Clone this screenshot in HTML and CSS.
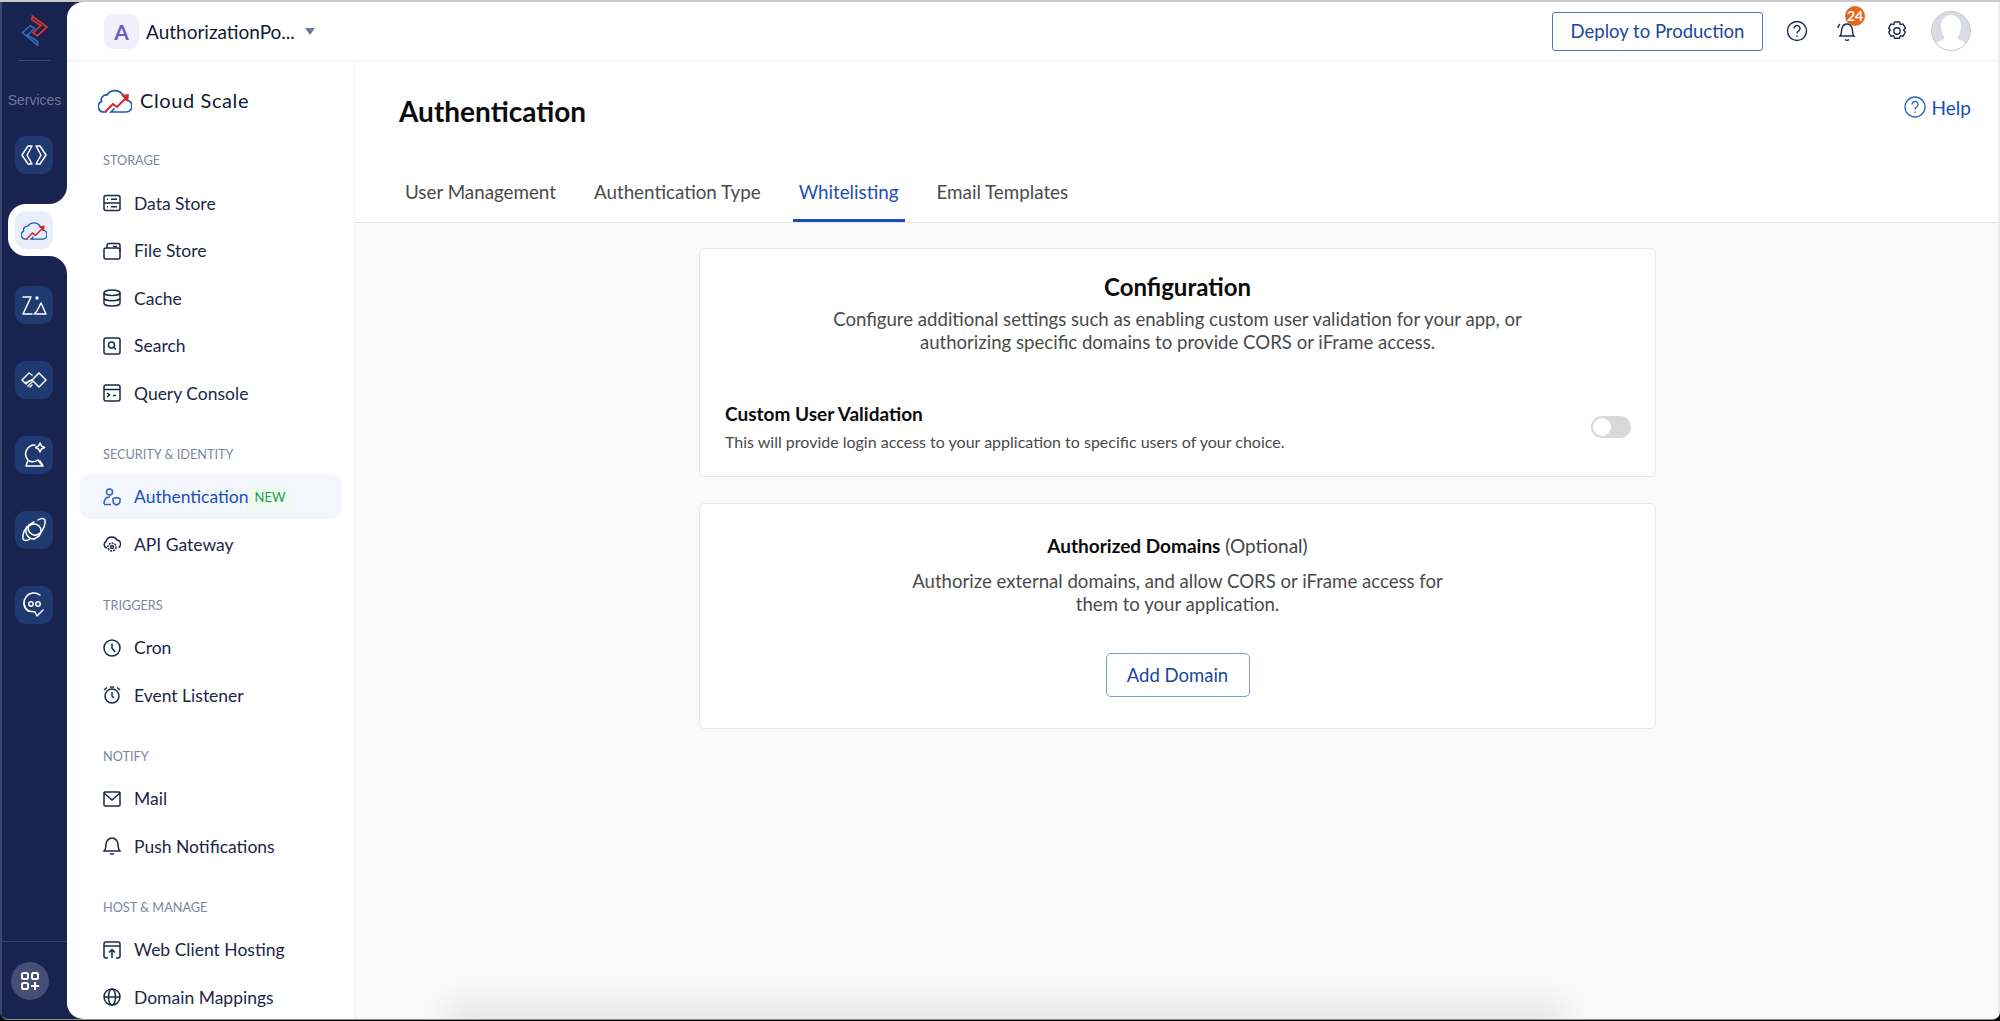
FILE: index.html
```html
<!DOCTYPE html>
<html lang="en">
<head>
    <meta charset="UTF-8">
    <title>Authentication</title>
    <link rel="stylesheet" href="styles.css">
</head>
<body>
    <svg class="defs" width="0" height="0">
        <defs>
            <symbol id="cloud" viewBox="0 0 34 26">
                <path d="M8 25H6a5.500 5.500 0 0 1-2.500-10.500A5 5 0 0 1 9 8a9.500 9.500 0 0 1 16 0" fill="none" stroke="#1c5aa6" stroke-width="1.700" stroke-linecap="round"/>
                <path d="M28 13a6 6 0 0 1 0 12H13l3-3" fill="none" stroke="#1c5aa6" stroke-width="1.700" stroke-linecap="round"/>
                <path d="M7 25l8-8 4 3 9-9" fill="none" stroke="#d8262c" stroke-width="2"/>
                <path d="M23 8l8-1-1 8z" fill="#d8262c"/>
            </symbol>
        </defs>
    </svg>

    <div class="app">
        <nav class="rail">
            <div class="rail-logo">
                <svg width="36" height="40" viewBox="15 10 36 40" fill="none" stroke-width="2">
                    <path d="M30.500 14l17 12.500-11 10-5-3.500 9-8-10.500-7z" stroke="#d8362f"/>
                    <path d="M19 33l9-8 5 3-8 8 11.500 7v4.500z" stroke="#2a6db5"/>
                </svg>
            </div>
            <div class="rail-label">Services</div>
            <div class="rail-items">
                <div class="rail-slot">
                    <div class="rail-tile">
                        <svg width="26" height="20" viewBox="0 0 26 20" class="rail-icon">
                            <path d="M7 1h4L6 10l5 9H7L1 10z"/><path d="M19 1h-4l5 9-5 9h4l6-9z"/>
                        </svg>
                    </div>
                </div>
                <div class="rail-slot active">
                    <div class="rail-tile">
                        <svg width="26" height="20"><use href="#cloud"/></svg>
                    </div>
                </div>
                <div class="rail-slot">
                    <div class="rail-tile">
                        <svg width="26" height="22" viewBox="0 0 26 22" class="rail-icon">
                            <path d="M2 3h8L2 20h9"/><path d="M13 20c2-1 3-3 4-5l3-6 5 11H15"/><circle cx="16" cy="4" r="1" fill="#fff"/>
                        </svg>
                    </div>
                </div>
                <div class="rail-slot">
                    <div class="rail-tile">
                        <svg width="26" height="16" viewBox="0 0 26 16" class="rail-icon">
                            <path d="M18 1l7 7-7 7-7-7z"/><path d="M11 3L8 1 1 8l3 3 7-3"/><path d="M5 12l3-3M7 14l4-4M9 15l2-2"/>
                        </svg>
                    </div>
                </div>
                <div class="rail-slot">
                    <div class="rail-tile">
                        <svg width="24" height="26" viewBox="0 0 24 26" class="rail-icon">
                            <path d="M13 3a9 9 0 0 0-7 15l-2 6h17l-3-5"/><path d="M7 19a9 9 0 0 0 9-1l3 4"/>
                            <path d="M18 1l1.500 3 3 1.500-3 1.500-1.500 3-1.500-3-3-1.500 3-1.500z"/>
                        </svg>
                    </div>
                </div>
                <div class="rail-slot">
                    <div class="rail-tile">
                        <svg width="26" height="26" viewBox="0 0 26 26" class="rail-icon">
                            <path d="M8 9a7 7 0 0 1 10 10l-5 3a8 8 0 0 1-7-12"/><path d="M18 17A7 7 0 0 1 8 8l5-3"/>
                            <path d="M8 8C4 11 1 17 2 22c1 2 4 2 7 0"/><path d="M18 17c4-3 7-10 6-14-1-2-4-2-7 0"/>
                        </svg>
                    </div>
                </div>
                <div class="rail-slot">
                    <div class="rail-tile">
                        <svg width="24" height="26" viewBox="0 0 24 26" class="rail-icon">
                            <path d="M18 3A10 10 0 0 0 6 19l7 1 2 4 6-6"/><path d="M7 19a10 10 0 0 1-5-8"/>
                            <circle cx="9" cy="12" r="2.200"/><circle cx="16" cy="12" r="2.200"/>
                        </svg>
                    </div>
                </div>
            </div>
            <div class="rail-foot">
                <div class="rail-add">
                    <svg width="20" height="20" viewBox="0 0 20 20" fill="none" stroke="#fff" stroke-width="2">
                        <rect x="2" y="2" width="6" height="6" rx="1.500"/><rect x="12" y="2" width="6" height="6" rx="1.500"/><rect x="2" y="12" width="6" height="6" rx="1.500"/>
                        <path d="M15 11v8M11 15h8"/>
                    </svg>
                </div>
            </div>
        </nav>

        <div class="shell">
            <header class="topbar">
                <div class="project">
                    <span class="project-badge">A</span>
                    <span class="project-name">AuthorizationPo...</span>
                    <span class="caret"></span>
                </div>
                <div class="top-actions">
                    <button class="btn-deploy">Deploy to Production</button>
                    <svg class="top-icon" width="22" height="22" viewBox="0 0 22 22" fill="none" stroke="#1c2a4f" stroke-width="1.400">
                        <circle cx="11" cy="11" r="9.500"/>
                        <path d="M8 8.500a3 3 0 1 1 4.500 2.600c-1 .6-1.500 1.200-1.500 2.400"/><path d="M11 15.500v1.500"/>
                    </svg>
                    <div class="bell">
                        <svg width="22" height="24" viewBox="0 0 22 24" fill="none" stroke="#1c2a4f" stroke-width="1.400">
                            <path d="M4 17c2-2 1-5 2-8s3-4 5-4 4 1 5 4 0 6 2 8z"/><path d="M9 20.500c1 1 3 1 4 0"/><path d="M2 9c0-2 1-3 2-4"/>
                        </svg>
                        <span class="bell-count">24</span>
                    </div>
                    <svg class="top-icon" width="22" height="22" viewBox="0 0 22 22" fill="none" stroke="#1c2a4f" stroke-width="1.400">
                        <path d="M8.500 2h5l.8 2.600 2.600-.7 2.500 4.300-1.900 2 1.900 1.800-2.500 4.300-2.600-.7-.8 2.600h-5l-.8-2.600-2.600.7-2.500-4.300 1.900-1.800-1.900-2 2.500-4.300 2.600.7z" stroke-linejoin="round"/>
                        <circle cx="11" cy="11" r="3.200"/>
                    </svg>
                    <div class="avatar">
                        <svg width="38" height="38" viewBox="0 0 38 38">
                            <path d="M2 38c1-8 6-9 10-11 1-2-3-5-3-13C9 7 14 3 19 3s10 4 10 11c0 8-4 11-3 13 4 2 9 3 10 11z" fill="#fff"/>
                        </svg>
                    </div>
                </div>
            </header>

            <div class="body">
                <aside class="sidebar">
                    <div class="brand">
                        <svg width="34" height="26"><use href="#cloud"/></svg>
                        <span>Cloud Scale</span>
                    </div>

                    <div class="nav-section">STORAGE</div>
                    <a class="nav-item">
                        <svg class="nav-icon" viewBox="0 0 18 18"><rect x="1" y="1.500" width="16" height="15" rx="2"/><path d="M1 9h16"/><path d="M4 5.200h1M4 12.800h1M8 5.200h6M8 12.800h6"/></svg>
                        Data Store
                    </a>
                    <a class="nav-item">
                        <svg class="nav-icon" viewBox="0 0 18 18"><path d="M1 8a2 2 0 0 1 2-2h12a2 2 0 0 1 2 2v7a2 2 0 0 1-2 2H3a2 2 0 0 1-2-2z"/><path d="M4 6V3.500a2 2 0 0 1 2-2h9a2 2 0 0 1 2 2V10"/><path d="M10 4.500h4"/></svg>
                        File Store
                    </a>
                    <a class="nav-item">
                        <svg class="nav-icon" viewBox="0 0 18 18"><ellipse cx="9" cy="3.800" rx="8" ry="2.800"/><path d="M1 3.800v10.400c0 1.500 3.500 2.800 8 2.800s8-1.300 8-2.800V3.800"/><path d="M1 9c0 1.500 3.500 2.800 8 2.800s8-1.300 8-2.800"/></svg>
                        Cache
                    </a>
                    <a class="nav-item">
                        <svg class="nav-icon" viewBox="0 0 18 18"><rect x="1" y="1" width="16" height="16" rx="2"/><circle cx="8.500" cy="8" r="3"/><path d="M11 10.500l2 2"/></svg>
                        Search
                    </a>
                    <a class="nav-item">
                        <svg class="nav-icon" viewBox="0 0 18 18"><rect x="1" y="1" width="16" height="16" rx="2"/><path d="M1 5.500h16"/><path d="M4 9l2.500 2L4 13"/><path d="M10 11.500h3"/></svg>
                        Query Console
                    </a>

                    <div class="nav-section">SECURITY &amp; IDENTITY</div>
                    <a class="nav-item selected">
                        <svg class="nav-icon" viewBox="0 0 18 18"><circle cx="6.500" cy="4" r="3"/><path d="M1 16c0-4 2-7 6-7"/><path d="M1 16.500h7"/><path d="M10 10.500l3.500-1 3.500 1v3c0 2-2 3-3.500 3.500-1.500-.5-3.500-1.500-3.500-3.500z"/></svg>
                        Authentication
                        <span class="badge-new">NEW</span>
                    </a>
                    <a class="nav-item">
                        <svg class="nav-icon" viewBox="0 0 18 18"><path d="M4 13a3.500 3.500 0 0 1-1-6.500A6 6 0 0 1 14 5a4 4 0 0 1 1.500 7.500"/><circle cx="9" cy="12" r="1.500"/><circle cx="9" cy="12" r="4" stroke-dasharray="2 1"/></svg>
                        API Gateway
                    </a>

                    <div class="nav-section">TRIGGERS</div>
                    <a class="nav-item">
                        <svg class="nav-icon" viewBox="0 0 18 18"><circle cx="9" cy="9" r="8"/><path d="M9 4.500V9l3 4"/></svg>
                        Cron
                    </a>
                    <a class="nav-item">
                        <svg class="nav-icon" viewBox="0 0 18 18"><circle cx="9" cy="10" r="7"/><path d="M9 6v4l2 2"/><path d="M1 4l3-2.500M17 4l-3-2.500M7 1h4"/></svg>
                        Event Listener
                    </a>

                    <div class="nav-section">NOTIFY</div>
                    <a class="nav-item">
                        <svg class="nav-icon" viewBox="0 0 18 18"><rect x="1" y="2" width="16" height="14" rx="1"/><path d="M1 3l8 7 8-7"/></svg>
                        Mail
                    </a>
                    <a class="nav-item">
                        <svg class="nav-icon" viewBox="0 0 18 18"><path d="M1 14c2-2 2-4 2-7s3-6 6-6 6 3 6 6 0 5 2 7z"/><path d="M7 17h4"/></svg>
                        Push Notifications
                    </a>

                    <div class="nav-section">HOST &amp; MANAGE</div>
                    <a class="nav-item">
                        <svg class="nav-icon" viewBox="0 0 18 18"><path d="M5 17H3a2 2 0 0 1-2-2V3a2 2 0 0 1 2-2h12a2 2 0 0 1 2 2v12a2 2 0 0 1-2 2h-2"/><path d="M1 5h16"/><path d="M9 17v-8M6 11.500L9 8.500l3 3"/></svg>
                        Web Client Hosting
                    </a>
                    <a class="nav-item">
                        <svg class="nav-icon" viewBox="0 0 18 18"><circle cx="9" cy="9" r="8"/><ellipse cx="9" cy="9" rx="3.500" ry="8"/><path d="M1 9h16"/></svg>
                        Domain Mappings
                    </a>
                </aside>

                <main class="content">
                    <div class="page-head">
                        <div class="title-row">
                            <h1>Authentication</h1>
                            <a class="help">
                                <svg width="22" height="22" viewBox="0 0 22 22" fill="none" stroke="#2a62c4" stroke-width="1.300">
                                    <circle cx="11" cy="11" r="10"/>
                                    <path d="M8 8.500a3 3 0 1 1 4.500 2.600c-1 .6-1.500 1.200-1.500 2.400"/><path d="M11 15.500v1.500"/>
                                </svg>
                                Help
                            </a>
                        </div>
                        <div class="tabs">
                            <a class="tab">User Management</a>
                            <a class="tab">Authentication Type</a>
                            <a class="tab current">Whitelisting</a>
                            <a class="tab">Email Templates</a>
                        </div>
                    </div>

                    <div class="panel-area">
                        <section class="card card-config">
                            <h2>Configuration</h2>
                            <p class="card-text">Configure additional settings such as enabling custom user validation for your app, or<br>authorizing specific domains to provide CORS or iFrame access.</p>
                            <div class="setting">
                                <div>
                                    <h4>Custom User Validation</h4>
                                    <p>This will provide login access to your application to specific users of your choice.</p>
                                </div>
                                <span class="toggle"></span>
                            </div>
                        </section>
                        <section class="card card-domains">
                            <h3><strong>Authorized Domains</strong> (Optional)</h3>
                            <p class="card-text">Authorize external domains, and allow CORS or iFrame access for<br>them to your application.</p>
                            <button class="btn-add">Add Domain</button>
                        </section>
                    </div>
                </main>
            </div>
        </div>
    </div>
</body>
</html>
```

FILE: styles.css
```css
* {
    box-sizing: border-box;
}

html, body {
    margin: 0;
    height: 100%;
    overflow: hidden;
}

body {
    font-family: "Lato", "Liberation Sans", sans-serif;
    background-color: #000;
    color: #1b2748;
}

.defs {
    display: block;
    height: 0;
}

.app {
    display: flex;
    height: 1020px;
    border-top: 2px solid #c9c9cb;
    border-bottom: 1px solid #8d8f96;
    border-radius: 0 0 8px 8px;
    background-color: #19234f;
    overflow: hidden;
}

/* left rail */
.rail {
    width: 67px;
    flex-shrink: 0;
    display: flex;
    flex-direction: column;
    border-left: 2px solid #3a4570;
}

.rail-logo {
    height: 59px;
    margin: 0 17px;
    border-bottom: 1px solid #3c4670;
    padding-top: 8px;
    display: flex;
    justify-content: center;
}

.rail-label {
    margin-top: 31px;
    font-family: "Liberation Sans", sans-serif;
    font-size: 14px;
    line-height: 16px;
    color: #6f7799;
    text-align: center;
}

.rail-items {
    margin-top: 21px;
    display: flex;
    flex-direction: column;
    gap: 23px;
    flex: 1;
}

.rail-slot {
    height: 52px;
    display: flex;
    align-items: center;
    padding-left: 13px;
    position: relative;
}

.rail-tile {
    width: 38px;
    height: 38px;
    border-radius: 11px;
    background-color: #1f3a70;
    display: flex;
    align-items: center;
    justify-content: center;
}

.rail-icon {
    fill: none;
    stroke: #fff;
    stroke-width: 1.500;
    stroke-linejoin: round;
    stroke-linecap: round;
}

.rail-slot.active {
    margin-left: 6px;
    padding-left: 7px;
    background-color: #fff;
    border-radius: 18px 0 0 18px;
}

.rail-slot.active .rail-tile {
    background-color: #e9effa;
}

.rail-slot.active::before,
.rail-slot.active::after {
    content: "";
    position: absolute;
    right: 0;
    width: 18px;
    height: 18px;
    background-color: transparent;
}

.rail-slot.active::before {
    top: -18px;
    border-bottom-right-radius: 18px;
    box-shadow: 6px 6px 0 6px #fff;
}

.rail-slot.active::after {
    bottom: -18px;
    border-top-right-radius: 18px;
    box-shadow: 6px -6px 0 6px #fff;
}

.rail-foot {
    height: 78px;
    border-top: 1px solid #333e69;
    padding: 20px 0 0 9px;
}

.rail-add {
    width: 38px;
    height: 38px;
    border-radius: 50%;
    background-color: #454e74;
    display: flex;
    align-items: center;
    justify-content: center;
}

/* main shell */
.shell {
    flex: 1;
    display: flex;
    flex-direction: column;
    min-width: 0;
    background-color: #fff;
    border-radius: 16px 0 0 16px;
    border-right: 2px solid #ececec;
    overflow: hidden;
}

.topbar {
    height: 59px;
    flex-shrink: 0;
    display: flex;
    align-items: center;
    justify-content: space-between;
    border-bottom: 1px solid #f0f1f3;
    padding: 0 27px 0 37px;
}

.project {
    display: flex;
    align-items: center;
}

.project-badge {
    width: 35px;
    height: 35px;
    border-radius: 9px;
    background-color: #f1effb;
    color: #6e5bc4;
    font-size: 21px;
    font-weight: 700;
    display: flex;
    align-items: center;
    justify-content: center;
}

.project-name {
    margin-left: 7px;
    font-size: 19px;
    color: #111a33;
}

.caret {
    margin-left: 10px;
    width: 0;
    height: 0;
    border-left: 5px solid transparent;
    border-right: 5px solid transparent;
    border-top: 7px solid #6d7c9c;
}

.top-actions {
    display: flex;
    align-items: center;
}

.btn-deploy {
    width: 211px;
    height: 39px;
    background-color: #fff;
    border: 1px solid #4d78b8;
    border-radius: 3px;
    color: #17479e;
    font-family: inherit;
    font-size: 18.500px;
    margin-right: 23px;
}

.top-icon {
    display: block;
}

.bell {
    position: relative;
    width: 22px;
    height: 24px;
    margin: 0 28px;
}

.bell-count {
    position: absolute;
    top: -13px;
    left: 9px;
    width: 20px;
    height: 20px;
    border-radius: 50%;
    background-color: #e8651a;
    color: #fff;
    font-size: 14px;
    font-weight: 700;
    line-height: 20px;
    text-align: center;
}

.avatar {
    width: 40px;
    height: 40px;
    margin-left: 23px;
    border-radius: 50%;
    border: 1px solid #c6c8cc;
    background-color: #d9dde3;
    overflow: hidden;
}

.body {
    flex: 1;
    display: flex;
    min-height: 0;
}

/* sidebar */
.sidebar {
    width: 288px;
    flex-shrink: 0;
    border-right: 1px solid #f0f1f3;
    padding: 0 12px 0 13px;
    overflow: hidden;
}

.brand {
    height: 52px;
    margin: 13px 0 0 18px;
    display: flex;
    align-items: center;
    gap: 8px;
    font-size: 20px;
    letter-spacing: 0.6px;
    color: #111a33;
}

.nav-section {
    font-size: 12.700px;
    line-height: 16px;
    color: #7a86a3;
    padding-left: 23px;
    margin-top: 30px;
    margin-bottom: 12.500px;
}

.brand + .nav-section {
    margin-top: 26px;
}

.nav-item {
    height: 45px;
    margin-bottom: 2.500px;
    display: flex;
    align-items: center;
    padding-left: 23px;
    font-size: 17.500px;
    color: #1b2748;
    border-radius: 10px;
}

.nav-icon {
    width: 18px;
    height: 18px;
    margin-right: 13px;
    flex-shrink: 0;
    fill: none;
    stroke: #1b2748;
    stroke-width: 1.500;
}

.nav-item.selected {
    background-color: #f4f6fd;
    color: #1a4fb4;
}

.nav-item.selected .nav-icon {
    stroke: #2a62c4;
}

.badge-new {
    margin-left: 1px;
    background-color: #eefaf0;
    color: #1ea24a;
    font-size: 13px;
    line-height: 24px;
    padding: 0 5px;
}

/* content */
.content {
    flex: 1;
    min-width: 0;
    display: flex;
    flex-direction: column;
}

.page-head {
    height: 162px;
    flex-shrink: 0;
    border-bottom: 1px solid #e4e5e8;
    display: flex;
    flex-direction: column;
    justify-content: space-between;
}

.title-row {
    display: flex;
    justify-content: space-between;
    padding: 32px 27px 0 44px;
}

h1 {
    margin: 0;
    font-size: 28px;
    line-height: 36px;
    color: #0c0c0c;
}

.help {
    display: flex;
    align-items: center;
    gap: 6px;
    height: 24px;
    margin-top: 2px;
    font-size: 19px;
    color: #1a4fb4;
}

.tabs {
    display: flex;
    gap: 26px;
    padding-left: 44px;
}

.tab {
    height: 51px;
    padding: 0 6px;
    line-height: 42px;
    font-size: 18.800px;
    color: #4a4a4a;
}

.tab.current {
    color: #1a4fb4;
    border-bottom: 3px solid #1a4fb4;
}

.panel-area {
    flex: 1;
    background-color: #fafafa;
    padding: 25px 0 0 2px;
    display: flex;
    flex-direction: column;
    align-items: center;
    gap: 26px;
    position: relative;
    overflow: hidden;
}

/* soft grey glow along the bottom edge */
.panel-area::after {
    content: "";
    position: absolute;
    left: 105px;
    width: 1090px;
    bottom: -8px;
    height: 8px;
    box-shadow: 0 0 34px 16px rgba(0, 0, 0, 0.09);
}

.card {
    width: 957px;
    background-color: #fff;
    border: 1px solid #e7e8ea;
    border-radius: 5px;
    text-align: center;
}

.card-config {
    height: 229px;
    padding-top: 24px;
}

.card-domains {
    height: 226px;
    padding-top: 30px;
}

h2 {
    margin: 0;
    font-size: 24px;
    line-height: 28px;
    font-weight: 700;
    color: #0c0c0c;
}

h3 {
    margin: 0;
    font-size: 19px;
    line-height: 24px;
    font-weight: 400;
    color: #444;
}

h3 strong {
    color: #0c0c0c;
}

.card-text {
    margin: 0;
    font-size: 18.600px;
    line-height: 23px;
    color: #4a4a4a;
}

.card-config .card-text {
    margin-top: 7px;
}

.card-domains .card-text {
    margin-top: 12px;
}

.setting {
    display: flex;
    align-items: center;
    justify-content: space-between;
    text-align: left;
    margin-top: 48px;
    padding: 0 24px 0 25px;
}

h4 {
    margin: 0;
    font-size: 19px;
    line-height: 24px;
    color: #0c0c0c;
}

.setting p {
    margin: 5px 0 0;
    font-size: 16px;
    line-height: 21px;
    color: #4a4a4a;
}

.toggle {
    width: 40px;
    height: 22px;
    border-radius: 11px;
    background-color: #d8d8d8;
    position: relative;
}

.toggle::after {
    content: "";
    position: absolute;
    left: 2px;
    top: 2px;
    width: 18px;
    height: 18px;
    border-radius: 50%;
    background-color: #fff;
}

.btn-add {
    margin-top: 37px;
    width: 144px;
    height: 44px;
    background-color: #fff;
    border: 1px solid #7d9bd0;
    border-radius: 5px;
    color: #17479e;
    font-family: inherit;
    font-size: 18.500px;
}
```
